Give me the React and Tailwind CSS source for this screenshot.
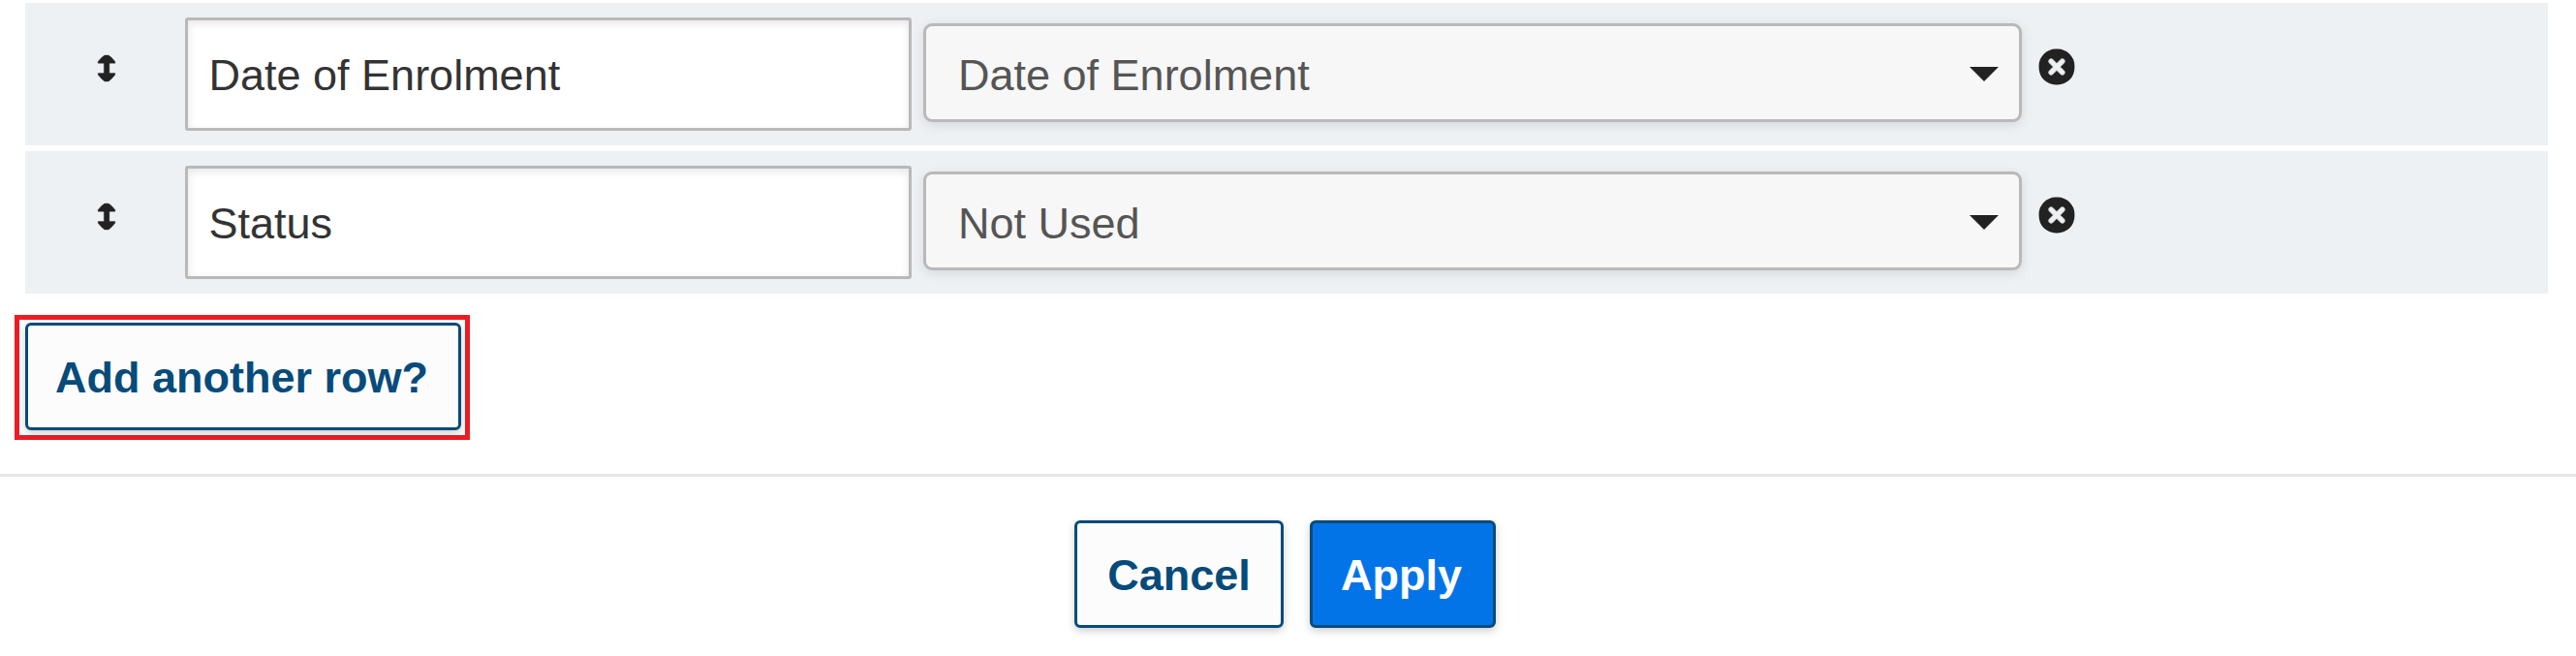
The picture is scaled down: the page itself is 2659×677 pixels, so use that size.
const rows = [
  { label: 'Date of Enrolment', mapping: 'Date of Enrolment' },
  { label: 'Status', mapping: 'Not Used' },
];

function MoveIcon() {
  return (
    <svg className="mt-[53px] ml-[73px] h-[29px] w-[22px] shrink-0" viewBox="0 0 22 29" fill="#222222" aria-hidden="true">
      <path d="M9 1H13L16 3.200L19.800 7.500V9.300H13.900V19.500H19.800V21.300L16 25.600L13 28H9L6 25.600L2.200 21.300V19.500H8.300V9.300H2.200V7.500L6 3.200Z" stroke="#222222" strokeOpacity="0.35" strokeWidth="1" strokeLinejoin="round" />
    </svg>
  );
}

function RemoveIcon() {
  return (
    <svg className="mt-[47px] ml-[17px] h-[38px] w-[38px] shrink-0" viewBox="0 0 38 38" aria-hidden="true">
      <rect x="0.6" y="0.6" width="36.8" height="36.8" rx="17.4" fill="#222222" />
      <path d="M13.200 13.200L24.800 24.800M24.800 13.200L13.200 24.800" stroke="#d9dcde" strokeWidth="5.600" strokeLinecap="round" />
      <path d="M13.200 13.200L24.800 24.800M24.800 13.200L13.200 24.800" stroke="#edf1f4" strokeWidth="3.600" strokeLinecap="round" />
    </svg>
  );
}

function FieldRow({ label, mapping }) {
  return (
    <div className="flex h-[147px] items-start bg-[#edf1f4]">
      <MoveIcon />
      <div className="mt-[15px] ml-[70px] flex h-[117px] w-[750px] items-center rounded-[3px] border-[3px] border-[#b9b9b9] bg-white pt-[2px] pl-[21.5px] text-[#333333] shadow-[inset_0_3px_9px_rgba(0,0,0,0.1)]">
        {label}
      </div>
      <div className="mt-[21px] ml-[12px] flex h-[102px] w-[1134px] items-center justify-between rounded-[9px] border-[3px] border-[#b9b9b9] bg-[#f7f7f7] pr-[21px] pl-[33px] text-[#555555] shadow-[0_3px_12px_rgba(0,0,0,0.1)]">
        <span className="pt-[6px]">{mapping}</span>
        <svg className="mt-[3px] h-[15px] w-[30px]" viewBox="0 0 30 15" fill="#222222" aria-hidden="true">
          <path d="M0 0H30L15 15Z" />
        </svg>
      </div>
      <RemoveIcon />
    </div>
  );
}

export default function App() {
  return (
    <div className="h-[677px] w-[2659px] overflow-hidden bg-white pt-[3px] font-['Liberation_Sans',Arial,sans-serif] text-[45px] leading-[54px] whitespace-nowrap">
      <div className="ml-[26px] flex w-[2604px] flex-col gap-[6px]">
        {rows.map((row) => (
          <FieldRow key={row.label} label={row.label} mapping={row.mapping} />
        ))}
      </div>
      <div className="mt-[22px] ml-[15px] h-[129px] w-[470px] border-[5px] border-[#ed1c24] pt-[3px] pl-[6px]">
        <button className="flex h-[111px] w-[450px] items-center justify-center rounded-[6px] border-[3px] border-[#064b7a] bg-[#fcfcfc] pt-[2px] pr-[3px] font-bold text-[#064b7a] shadow-[0_3px_9px_rgba(0,0,0,0.2)]">
          Add another row?
        </button>
      </div>
      <div className="mt-[35px] flex gap-[27px] border-t-[3px] border-[#e5e5e5] pt-[45px] pl-[1109px]">
        <button className="flex h-[111px] w-[216px] items-center justify-center rounded-[6px] border-[3px] border-[#064b7a] bg-[#fcfcfc] pt-[2px] font-bold text-[#064b7a] shadow-[0_3px_9px_rgba(0,0,0,0.2)]">
          Cancel
        </button>
        <button className="flex h-[111px] w-[192px] items-center justify-center rounded-[6px] border-[3px] border-[#064b7a] bg-[#0374e8] pt-[2px] pr-[3px] font-bold text-white shadow-[0_3px_9px_rgba(0,0,0,0.2)]">
          Apply
        </button>
      </div>
    </div>
  );
}
